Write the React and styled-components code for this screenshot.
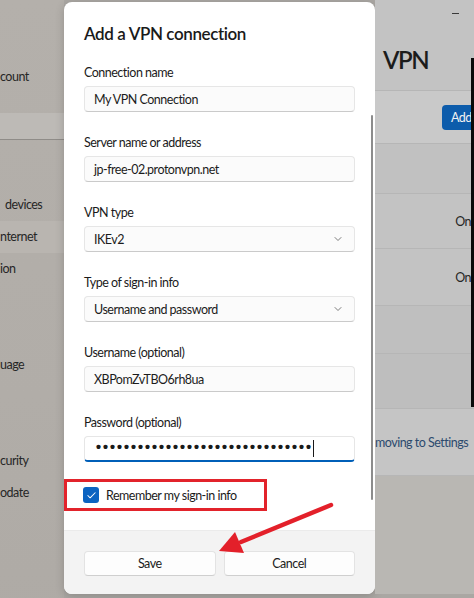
import React from "react";
import styled, { createGlobalStyle } from "styled-components";
import { ChevronDown, Check } from "lucide-react";

const GlobalStyle = createGlobalStyle`
  html, body {
    margin: 0;
    padding: 0;
    background: #aaa7a3;
    overflow: hidden;
  }
  body {
    font-family: Lato, "Open Sans", sans-serif;
    font-size: 12.5px;
    letter-spacing: -0.5px;
    color: #1b1b1b;
  }
`;

const Page = styled.div`
  position: relative;
  width: 474px;
  height: 598px;
  display: grid;
  grid-template-columns: 64px 311px 1fr;
  overflow: hidden;
`;

/* ---- dimmed settings window, left side ---- */
const Sidebar = styled.div`
  height: 594px;
  background: linear-gradient(180deg, #b4b0ab 0%, #b1ada8 60%, #aeaaa5 100%);
  display: flex;
  flex-direction: column;
  padding-top: 66px;
  color: #262626;
  overflow: hidden;
`;

const Profile = styled.div`
  height: 22px;
  line-height: 22px;
  white-space: nowrap;
`;

const SearchBand = styled.div`
  margin-top: 25px;
  height: 26px;
  background: #bdbab6;
  border-bottom: 1px solid #8f8c88;
`;

const NavList = styled.div`
  margin-top: 49px;
  display: flex;
  flex-direction: column;
`;

const NavItem = styled.div`
  height: 32px;
  line-height: 32px;
  white-space: nowrap;
  padding-left: ${(p) => p.$indent || 0}px;
  background: ${(p) => (p.$active ? "#b9b5b0" : "transparent")};
`;

/* ---- dialog ---- */
const Dialog = styled.div`
  position: relative;
  margin-top: 2px;
  height: 592px;
  background: #ffffff;
  border-radius: 8px;
  box-shadow: 0 2px 10px rgba(0, 0, 0, 0.18);
  display: flex;
  flex-direction: column;
  overflow: hidden;
`;

const Body = styled.div`
  flex: 1;
  padding: 20px 20px 0;
  display: flex;
  flex-direction: column;
`;

const Title = styled.h1`
  margin: 0 0 18px;
  font-size: 17px;
  line-height: 24px;
  font-weight: 600;
  letter-spacing: -0.4px;
  color: #1a1a1a;
`;

const Field = styled.div`
  display: flex;
  flex-direction: column;
  gap: 4px;
  margin-bottom: 22px;
`;

const Label = styled.div`
  line-height: 18px;
  color: #1b1b1b;
`;

const Input = styled.div`
  height: 26px;
  box-sizing: border-box;
  padding: 0 10px 0 9px;
  display: flex;
  align-items: center;
  justify-content: space-between;
  color: #1c1c1c;
  background: ${(p) => (p.$focused ? "#ffffff" : "#fbfbfb")};
  border: 1px solid #e6e6e6;
  border-bottom: ${(p) => (p.$focused ? "2px solid #005fb8" : "1px solid #cacaca")};
  border-radius: 4px;
`;

const Dots = styled.span`
  font-family: "Liberation Mono", monospace;
  font-size: 15px;
  font-weight: 700;
  letter-spacing: -2px;
  color: #1a1a1a;
  display: flex;
  align-items: center;
`;

const Caret = styled.span`
  display: inline-block;
  width: 1px;
  height: 17px;
  margin-left: 2px;
  background: #1a1a1a;
`;

const CheckRow = styled.label`
  margin: -5px 0 0 -20px;
  width: 203px;
  height: 32px;
  box-sizing: border-box;
  border: 3px solid #e2232b;
  padding-left: 16px;
  display: flex;
  align-items: center;
  gap: 7px;
  color: #1b1b1b;
`;

const CheckBox = styled.span`
  width: 16px;
  height: 16px;
  border-radius: 3px;
  background: #0b63c1;
  display: flex;
  align-items: center;
  justify-content: center;
  color: #fff;
`;

const ScrollThumb = styled.div`
  position: absolute;
  right: 2px;
  top: 113px;
  width: 2px;
  height: 385px;
  border-radius: 1px;
  background: #8c8c8c;
`;

const Footer = styled.div`
  height: 64px;
  box-sizing: border-box;
  background: #f3f3f3;
  border-top: 1px solid #ebebeb;
  padding: 20px 20px 0;
  display: grid;
  grid-template-columns: 1fr 1fr;
  gap: 8px;
  align-items: start;
`;

const Button = styled.button`
  height: 25px;
  border: 1px solid #e3e3e3;
  border-bottom-color: #cfcfcf;
  border-radius: 4px;
  background: #fdfdfd;
  font: inherit;
  letter-spacing: inherit;
  color: #1b1b1b;
  padding: 0;
`;

/* ---- dimmed settings window, right side ---- */
const Content = styled.div`
  position: relative;
  height: 594px;
  background: #c3c3c3;
  display: flex;
  flex-direction: column;
  color: #262626;
  overflow: hidden;
`;

const TitleBar = styled.div`
  height: 26px;
  display: flex;
  justify-content: flex-end;
  align-items: center;
  padding-right: 15px;
`;

const Minimize = styled.span`
  width: 7px;
  height: 1px;
  background: #3a3a3a;
`;

const PageTitle = styled.div`
  height: 64px;
  padding-left: 8px;
  font-size: 24px;
  font-weight: 600;
  line-height: 68px;
  letter-spacing: -1.5px;
  color: #1c1c1c;
`;

const Row = styled.div`
  height: ${(p) => p.$h}px;
  box-sizing: border-box;
  border-top: 1px solid #b6b6b6;
  background: ${(p) => p.$bg || "transparent"};
  display: flex;
  align-items: center;
  justify-content: ${(p) => (p.$end ? "flex-end" : "flex-start")};
  padding-right: 3px;
  white-space: nowrap;
`;

const AddButton = styled.div`
  margin-right: -25px;
  width: 54px;
  height: 25px;
  border-radius: 4px;
  background: #0d5cab;
  color: #f2f2f2;
  line-height: 25px;
  padding-left: 9px;
  box-sizing: border-box;
`;

const LinkText = styled.span`
  color: #2c4a6e;
`;

const EdgeBar = styled.div`
  position: absolute;
  right: 0;
  top: 58px;
  width: 3px;
  height: 349px;
  background: #0a0a0a;
`;

const Arrow = styled.svg`
  position: absolute;
  left: 210px;
  top: 495px;
  pointer-events: none;
`;

function TextField({ label, value, focused, select, children }) {
  return (
    <Field>
      <Label>{label}</Label>
      <Input $focused={focused}>
        {children || <span>{value}</span>}
        {select && <ChevronDown size={12} strokeWidth={1.6} color="#5c5c5c" />}
      </Input>
    </Field>
  );
}

export default function App() {
  return (
    <>
      <GlobalStyle />
      <Page>
        <Sidebar>
          <Profile>count</Profile>
          <SearchBand />
          <NavList>
            <NavItem $indent={5}>devices</NavItem>
            <NavItem $active>nternet</NavItem>
            <NavItem>ion</NavItem>
            <NavItem />
            <NavItem />
            <NavItem>uage</NavItem>
            <NavItem />
            <NavItem />
            <NavItem>curity</NavItem>
            <NavItem>odate</NavItem>
          </NavList>
        </Sidebar>

        <Dialog>
          <Body>
            <Title>Add a VPN connection</Title>
            <TextField label="Connection name" value="My VPN Connection" />
            <TextField label="Server name or address" value="jp-free-02.protonvpn.net" />
            <TextField label="VPN type" value="IKEv2" select />
            <TextField label="Type of sign-in info" value="Username and password" select />
            <TextField label="Username (optional)" value="XBPomZvTBO6rh8ua" />
            <TextField label="Password (optional)" focused>
              <Dots>
                {"•".repeat(31)}
                <Caret />
              </Dots>
            </TextField>
            <CheckRow>
              <CheckBox>
                <Check size={11} strokeWidth={2.2} />
              </CheckBox>
              Remember my sign-in info
            </CheckRow>
          </Body>
          <ScrollThumb />
          <Footer>
            <Button>Save</Button>
            <Button>Cancel</Button>
          </Footer>
        </Dialog>

        <Content>
          <TitleBar>
            <Minimize />
          </TitleBar>
          <PageTitle>VPN</PageTitle>
          <Row $h={53} $bg="#c9c9c9" $end>
            <AddButton>Add</AddButton>
          </Row>
          <Row $h={50} $bg="#c1c1c1" />
          <Row $h={55} $end>On</Row>
          <Row $h={57} $end>On</Row>
          <Row $h={48} $bg="#bfbfbf" />
          <Row $h={55} $bg="#bebebe" />
          <Row $h={67} $bg="#c5c5c5">
            <LinkText>moving to Settings</LinkText>
          </Row>
          <Row $h={119} $bg="#b9b7b3" />
          <EdgeBar />
        </Content>

        <Arrow width="130" height="66" viewBox="0 0 130 66">
          <line x1="121" y1="10" x2="31" y2="47" stroke="#e3202a" strokeWidth="4.5" strokeLinecap="round" />
          <polygon points="9,56 25,37 34,58" fill="#e3202a" />
        </Arrow>
      </Page>
    </>
  );
}
